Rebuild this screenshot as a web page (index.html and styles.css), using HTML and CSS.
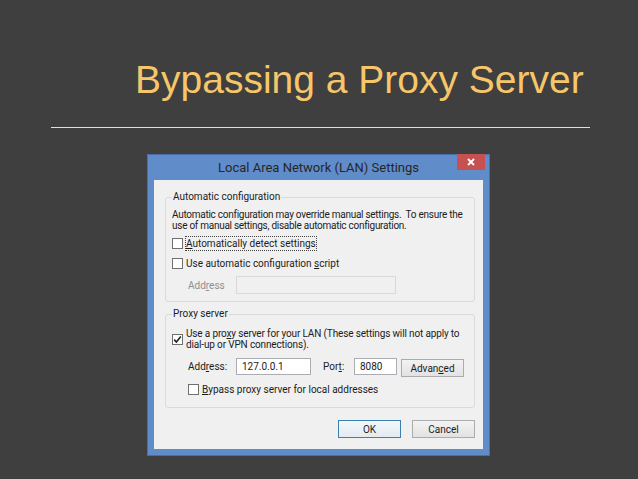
FILE: index.html
```html
<!DOCTYPE html>
<html>
  <head>
    <title>Bypassing a Proxy Server</title>
    <link rel="stylesheet" href="styles.css">
  </head>
  <body>
    <div class="slide">
      <h1 class="slide-title">Bypassing a Proxy Server</h1>
      <div class="rule"></div>

      <!-- LAN settings dialog -->
      <div class="window">
        <div class="titlebar">
          <span class="window-title">Local Area Network (LAN) Settings</span>
          <span class="close-btn">
            <svg width="8" height="8" viewBox="0 0 8 8">
              <path d="M1 1 L7 7 M7 1 L1 7" stroke="#fff" stroke-width="1.8" />
            </svg>
          </span>
        </div>
        <div class="client">
          <fieldset class="group">
            <legend>Automatic configuration</legend>
            <p class="note">Automatic configuration may override manual settings.&nbsp; To ensure the<br>use of manual settings, disable automatic configuration.</p>
            <label class="check-row">
              <span class="box"></span>
              <span class="focus"><u>A</u>utomatically detect settings</span>
            </label>
            <label class="check-row">
              <span class="box"></span>
              <span>Use automatic configuration <u>s</u>cript</span>
            </label>
            <div class="field-row indent">
              <span class="field-label disabled">Add<u>r</u>ess</span>
              <span class="input input-wide disabled-input"></span>
            </div>
          </fieldset>

          <fieldset class="group group-proxy">
            <legend>Proxy server</legend>
            <label class="check-row multi">
              <span class="box">
                <svg width="9" height="9" viewBox="0 0 9 9">
                  <path d="M1.2 4.6 L3.4 7 L7.8 1.6" fill="none" stroke="#222" stroke-width="1.6" />
                </svg>
              </span>
              <span class="condensed">Use a pro<u>x</u>y server for your LAN (These settings will not apply to<br>dial-up or VPN connections).</span>
            </label>
            <div class="field-row indent proxy-row">
              <span class="field-label">Add<u>r</u>ess:</span>
              <span class="input input-addr">127.0.0.1</span>
              <span class="field-label port-label">Por<u>t</u>:</span>
              <span class="input input-port">8080</span>
              <span class="btn btn-adv">Advan<u>c</u>ed</span>
            </div>
            <label class="check-row indent">
              <span class="box"></span>
              <span><u>B</u>ypass proxy server for local addresses</span>
            </label>
          </fieldset>

          <div class="actions">
            <span class="btn btn-default">OK</span>
            <span class="btn">Cancel</span>
          </div>
        </div>
      </div>
    </div>
  </body>
</html>
```

FILE: styles.css
```css
body {
  margin: 0;
  background-color: #3f3f3f; /* dark slide background */
  font-family: "Liberation Sans", Arial, sans-serif;
}

.slide {
  width: 638px;
  height: 479px;
  padding-top: 60px;
  box-sizing: border-box;
}

.slide-title {
  margin: 0 0 0 135px;
  font-size: 39px;
  line-height: 39px;
  font-weight: normal;
  color: #f6c66a;
}

.rule {
  height: 1px;
  margin: 28px 48px 0 51px;
  background-color: #f4deaa;
}

/* Dialog window */
.window {
  width: 343px;
  margin: 26px 0 0 147px;
  box-sizing: border-box;
  border: 1px solid #4a6fa8;
  background-color: #618cca;
  padding: 0 6px 6px;
  font-family: Roboto, "Liberation Sans", sans-serif;
}

.titlebar {
  position: relative;
  height: 25px;
  display: flex;
  align-items: center;
  justify-content: center;
}

.window-title {
  font-size: 13px;
  color: #262626;
}

.close-btn {
  position: absolute;
  top: -1px;
  right: -2px;
  width: 28px;
  height: 16px;
  background-color: #c75050;
  display: flex;
  align-items: center;
  justify-content: center;
}

.client {
  background-color: #f0f0f0;
  padding: 0 8px 11px 11px;
  font-size: 10px;
  line-height: 11px;
  color: #1c1c1c;
  white-space: nowrap;
  overflow: hidden;
}

.group {
  margin: 11px 0 0;
  padding: 0 8px 7px 6px;
  border: 1px solid #dadada;
  border-radius: 3px;
  min-inline-size: 0;
}

.group legend {
  padding: 0 1px;
  line-height: 12px;
}

.group-proxy {
  margin-top: 6px;
  padding-bottom: 10px;
}

.note {
  margin: 6px 0 0;
  letter-spacing: -0.27px;
}

.condensed {
  letter-spacing: -0.15px;
}

.check-row {
  display: flex;
  align-items: center;
  gap: 3px;
  height: 15px;
  margin-top: 5px;
}

.check-row.multi {
  height: auto;
  margin-top: 8px;
}

.box {
  width: 11px;
  height: 11px;
  flex: none;
  box-sizing: border-box;
  border: 1px solid #707070;
  background-color: #fff;
  display: flex;
  align-items: center;
  justify-content: center;
}

.focus {
  outline: 1px dotted #444;
  padding: 1px 0;
}

.indent {
  padding-left: 16px;
}

.field-row {
  display: flex;
  align-items: center;
  margin-top: 5px;
}

.proxy-row {
  align-items: flex-start;
  margin-top: 8px;
}

.proxy-row .field-label {
  line-height: 17px;
}

.field-label {
  width: 48px;
  flex: none;
}

.disabled {
  color: #8f8f8f;
}

.port-label {
  width: 31px;
  margin-left: 12px;
}

.input {
  height: 17px;
  box-sizing: border-box;
  border: 1px solid #abadb3;
  background-color: #fff;
  padding: 0 5px;
  line-height: 15px;
}

.input-wide {
  width: 160px;
  height: 18px;
}

.disabled-input {
  border-color: #d9d9d9;
  background-color: #f0f0f0;
}

.input-addr {
  width: 75px;
}

.input-port {
  width: 43px;
}

.btn {
  width: 63px;
  height: 18px;
  box-sizing: border-box;
  border: 1px solid #acacac;
  background: linear-gradient(#f3f3f3, #e2e2e2);
  display: flex;
  align-items: center;
  justify-content: center;
}

.btn-adv {
  margin-left: 4px;
  margin-top: 1px;
}

.btn-default {
  border-color: #3c7fb1;
  background: linear-gradient(#f3f7fa, #e3ebf1);
}

.actions {
  display: flex;
  justify-content: flex-end;
  gap: 11px;
  margin-top: 12px;
}
```
